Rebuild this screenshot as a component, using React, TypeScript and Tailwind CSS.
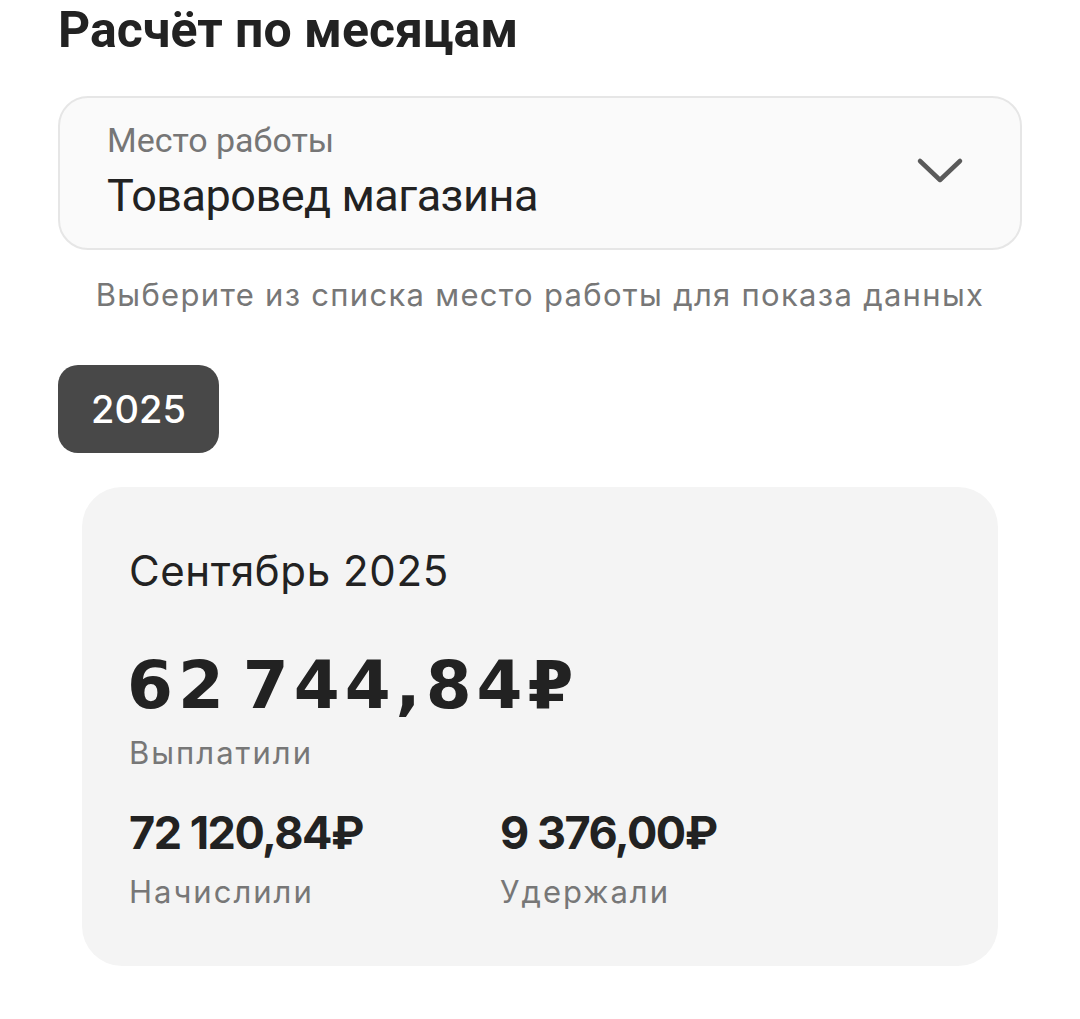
import React from 'react';

const roboto = { fontFamily: 'Roboto, "Noto Sans", sans-serif' };
const inter = { fontFamily: 'Inter, Roboto, "Noto Sans", sans-serif' };
const wide = { fontFamily: '"DejaVu Sans", Inter, sans-serif' };

const Amount: React.FC<{ value: string; label: string }> = ({ value, label }) => (
  <div className="w-[371px]">
    <div className="text-[45px] leading-[54px] font-bold tracking-[-1.5px] text-[#222]">{value}</div>
    <div className="mt-[13px] text-[31px] leading-[38px] tracking-[2px] text-[#777]">{label}</div>
  </div>
);

export default function App() {
  return (
    <div className="min-h-[1019px] w-[1080px] bg-white px-[58px]" style={roboto}>
      <h1 className="text-[50px] leading-[60px] font-bold text-[#222]">Расчёт по месяцам</h1>

      <div className="mt-[36px] flex items-center justify-between rounded-[30px] border-2 border-[#e6e6e6] bg-[#fafafa] pl-[47px] pr-[56px] pt-[22px] pb-[26px]">
        <div>
          <div className="text-[34px] leading-[40px] text-[#767676]">Место работы</div>
          <div className="mt-[10px] text-[45px] leading-[52px] tracking-[-0.5px] text-[#222]">Товаровед магазина</div>
        </div>
        <svg width="48" height="28" viewBox="0 0 48 28" fill="none">
          <path d="M4 4 L24 23 L44 4" stroke="#5a5a5a" strokeWidth="4.5" strokeLinecap="round" strokeLinejoin="round" />
        </svg>
      </div>

      <div style={inter}>
        <p className="mt-[27px] text-center text-[31px] leading-[36px] tracking-[1.3px] text-[#777]">
          Выберите из списка место работы для показа данных
        </p>

        <div className="mt-[52px] flex h-[88px] w-[161px] items-center justify-center rounded-[20px] bg-[#484848] text-[38px] font-medium text-white">
          2025
        </div>

        <div className="mx-[24px] mt-[34px] rounded-[40px] bg-[#f4f4f4] pl-[47px] pt-[59px] pb-[55px]">
          <div className="text-[42px] leading-[50px] tracking-[0.6px] text-[#222]">Сентябрь 2025</div>
          <div className="mt-[52px] -ml-[2px] text-[66px] leading-[75px] font-bold tracking-[5px] [word-spacing:-14px] text-[#222]" style={wide}>
            62 744,84₽
          </div>
          <div className="mt-[11px] text-[31px] leading-[38px] tracking-[2px] text-[#777]">Выплатили</div>
          <div className="mt-[34px] flex">
            <Amount value="72 120,84₽" label="Начислили" />
            <Amount value="9 376,00₽" label="Удержали" />
          </div>
        </div>
      </div>
    </div>
  );
}
